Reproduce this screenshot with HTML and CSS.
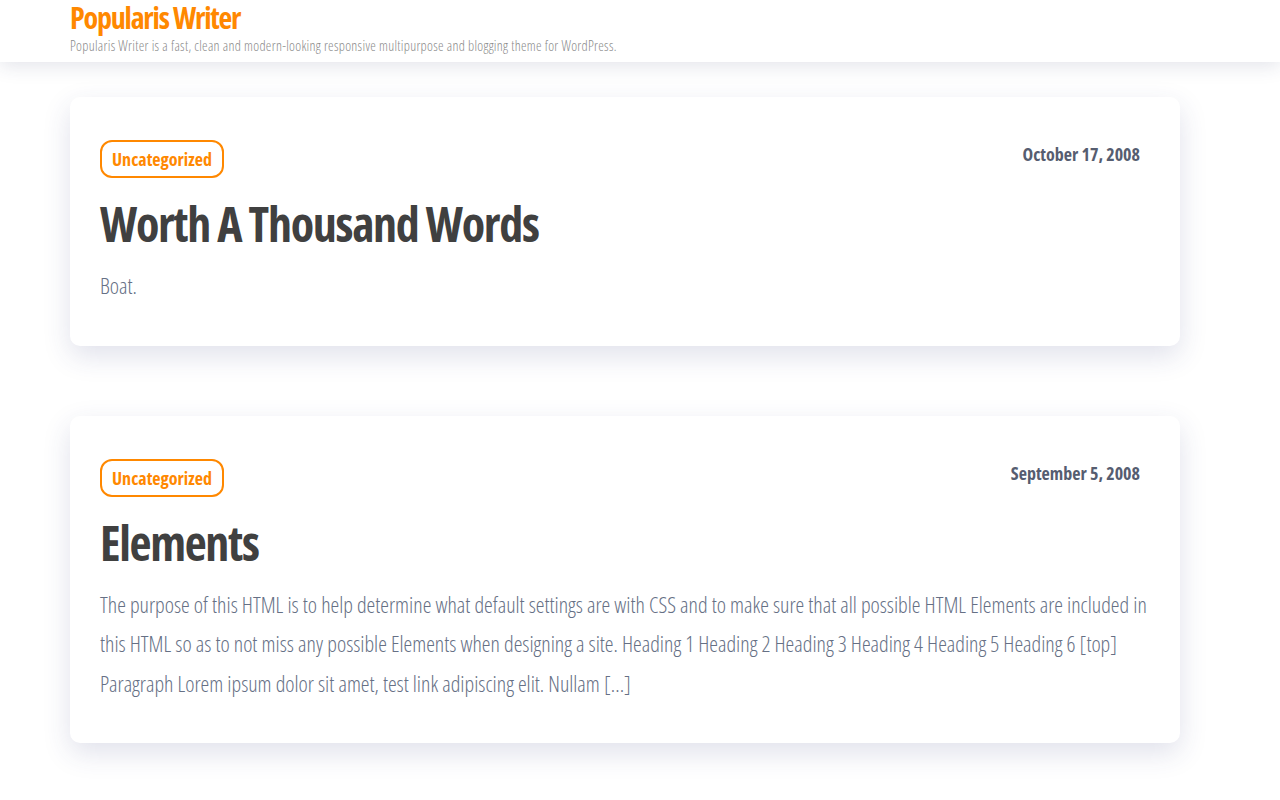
FILE: index.html
```html
<!DOCTYPE html>
<html lang="en">
<head>
<meta charset="utf-8">
<title>Popularis Writer</title>
<link rel="stylesheet" href="styles.css">
</head>
<body>
<header class="site-header">
  <div class="container">
    <a class="site-title" href="#">Popularis Writer</a>
    <p class="site-desc">Popularis Writer is a fast, clean and modern-looking responsive multipurpose and blogging theme for WordPress.</p>
  </div>
</header>
<main class="container posts">
  <article class="post">
    <div class="post-meta">
      <a class="cat" href="#">Uncategorized</a>
      <span class="date">October 17, 2008</span>
    </div>
    <h2 class="post-title">Worth A Thousand Words</h2>
    <p class="excerpt">Boat.</p>
  </article>
  <article class="post">
    <div class="post-meta">
      <a class="cat" href="#">Uncategorized</a>
      <span class="date">September 5, 2008</span>
    </div>
    <h2 class="post-title">Elements</h2>
    <p class="excerpt">The purpose of this HTML is to help determine what default settings are with CSS and to make sure that all possible HTML Elements are included in this HTML so as to not miss any possible Elements when designing a site. Heading 1 Heading 2 Heading 3 Heading 4 Heading 5 Heading 6 [top] Paragraph Lorem ipsum dolor sit amet, test link adipiscing elit. Nullam […]</p>
  </article>
</main>
</body>
</html>
```
FILE: styles.css
```css
* { box-sizing: border-box; }
body {
  margin: 0;
  background: #fff;
  font-family: "Open Sans", "Liberation Sans", sans-serif;
  font-stretch: 75%;
  color: #5f6577;
}
a { text-decoration: none; }
.container {
  width: 1110px;
  margin: 0 100px 0 70px;
}
.site-header {
  background: #fff;
  height: 62px;
  box-shadow: 0 4px 18px rgba(40, 50, 90, 0.13);
  position: relative;
  z-index: 1;
}
.site-title {
  display: block;
  color: #ff8800;
  font-size: 30px;
  font-weight: 700;
  line-height: 36px;
  letter-spacing: -1.2px;
}
.site-desc {
  margin: 0;
  font-size: 14px;
  font-weight: 300;
  color: #8a8a8a;
  line-height: 20px;
  letter-spacing: 0.3px;
}
.posts {
  padding-top: 35px;
  padding-bottom: 40px;
  display: flex;
  flex-direction: column;
  gap: 70px;
}
.post {
  background: #fff;
  border-radius: 10px;
  box-shadow: 0 10px 28px rgba(45, 55, 120, 0.15);
  padding: 43px 40px 40px 30px;
}
.post-meta {
  display: flex;
  justify-content: space-between;
  align-items: flex-start;
}
.cat {
  display: inline-block;
  border: 2px solid #ff8800;
  border-radius: 12px;
  color: #ff8800;
  font-size: 18px;
  font-weight: 700;
  line-height: 34px;
  padding: 0 10px;
}
.date {
  font-size: 18px;
  font-weight: 700;
  color: #565d70;
  line-height: 28px;
}
.post-title {
  margin: 16px 0 12px;
  font-size: 48px;
  font-weight: 700;
  color: #404040;
  line-height: 60px;
  letter-spacing: -1.3px;
}
.excerpt {
  margin: 0 -10px 0 0;
  font-size: 22px;
  font-weight: 300;
  line-height: 39.5px;
  color: #667085;
}
```
